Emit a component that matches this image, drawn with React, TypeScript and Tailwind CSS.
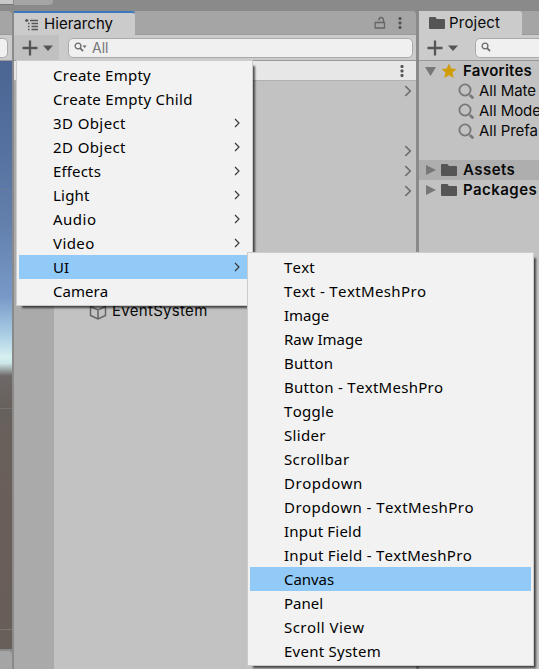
import React from "react";

type Item = { label: string; sub?: boolean; active?: boolean; track?: string };

const createMenu: Item[] = [
  { label: "Create Empty", track: "tracking-[0.25px]" },
  { label: "Create Empty Child", track: "tracking-[0.28px]" },
  { label: "3D Object", sub: true, track: "tracking-[0.4px]" },
  { label: "2D Object", sub: true, track: "tracking-[0.4px]" },
  { label: "Effects", sub: true, track: "tracking-[0.15px]" },
  { label: "Light", sub: true, track: "tracking-[0.2px]" },
  { label: "Audio", sub: true, track: "tracking-[0.5px]" },
  { label: "Video", sub: true, track: "tracking-[0.4px]" },
  { label: "UI", sub: true, active: true },
  { label: "Camera", track: "tracking-[0.05px]" },
];

const uiMenu: Item[] = [
  { label: "Text", track: "tracking-[0.2px]" },
  { label: "Text - TextMeshPro", track: "tracking-[0.37px]" },
  { label: "Image" },
  { label: "Raw Image" },
  { label: "Button", track: "tracking-[0.15px]" },
  { label: "Button - TextMeshPro", track: "tracking-[0.28px]" },
  { label: "Toggle", track: "tracking-[0.3px]" },
  { label: "Slider", track: "tracking-[0.3px]" },
  { label: "Scrollbar", track: "tracking-[0.35px]" },
  { label: "Dropdown", track: "tracking-[0.5px]" },
  { label: "Dropdown - TextMeshPro", track: "tracking-[0.43px]" },
  { label: "Input Field", track: "tracking-[0.2px]" },
  { label: "Input Field - TextMeshPro", track: "tracking-[0.28px]" },
  { label: "Canvas", active: true, track: "tracking-[-0.05px]" },
  { label: "Panel" },
  { label: "Scroll View", track: "tracking-[0.45px]" },
  { label: "Event System", track: "tracking-[0.25px]" },
];

function MenuRows({ items }: { items: Item[] }) {
  return (
    <>
      {items.map((it) => (
        <div
          key={it.label}
          className={`flex h-6 items-center justify-between pl-[34px] pr-[10px] ${it.active ? "bg-[#91c9f7]" : ""}`}
        >
          <span className={`whitespace-pre [font-kerning:none] ${it.track ?? ""}`}>{it.label}</span>
          {it.sub && (
            <svg width="6" height="10" viewBox="0 0 6 10" fill="none" stroke="#333" strokeWidth="1.1">
              <path d="M1 1l4 4-4 4" />
            </svg>
          )}
        </div>
      ))}
    </>
  );
}

function Plus() {
  return (
    <svg width="32" height="16" viewBox="0 0 32 16" className="shrink-0">
      <path d="M8 .5v15M.5 8h15" stroke="#555" strokeWidth="2.3" />
      <path d="M21 5.5h10l-5 5.5z" fill="#555" />
    </svg>
  );
}

function Kebab() {
  return (
    <svg width="4" height="14" viewBox="0 0 4 14" fill="#555">
      <rect x="0.5" y="1" width="3" height="3" rx="1" />
      <rect x="0.5" y="5.5" width="3" height="3" rx="1" />
      <rect x="0.5" y="10" width="3" height="3" rx="1" />
    </svg>
  );
}

function Folder() {
  return (
    <svg width="16" height="14" viewBox="0 0 16 14" fill="#555" className="shrink-0">
      <path d="M0 2Q0 1 1 1h5q1 0 1.3 1l.4 1H15q1 0 1 1v8q0 1-1 1H1q-1 0-1-1z" />
    </svg>
  );
}

function Lens() {
  return (
    <svg width="17" height="17" viewBox="0 0 17 17" fill="none" stroke="#777" className="shrink-0">
      <circle cx="7" cy="7" r="5.6" strokeWidth="1.8" />
      <path d="M10.8 11l1.2 1.100" strokeWidth="1.6" />
      <path d="M12 12.200l3.300 3" strokeWidth="2.8" />
    </svg>
  );
}

function SmallLens({ menu }: { menu?: boolean }) {
  return (
    <svg width="13" height="11" viewBox="0 0 13 11" fill="none" stroke="#6b6b6b" className="shrink-0">
      <circle cx="4" cy="4" r="2.9" strokeWidth="1.3" />
      <path d="M6.1 6.1l3 3" strokeWidth="1.6" />
      {menu && <path d="M8.500 3.500h4.200l-2.100 2.400z" fill="#6b6b6b" stroke="none" />}
    </svg>
  );
}

function Chevron() {
  return (
    <svg width="8" height="12" viewBox="0 0 8 12" fill="none" stroke="#6e6e6e" strokeWidth="1.6">
      <path d="M1.3 1.2L6.3 6l-5 4.800" />
    </svg>
  );
}

const hierarchyRows = ["chevron", "", "", "chevron", "chevron", "chevron", "", "", "", "", "", "object"];

export default function App() {
  return (
    <div className="relative flex h-[669px] w-[539px] flex-col overflow-hidden bg-[#8a8a8a] font-['Inter',sans-serif] text-[15px] text-[#090909]">
      <div className="flex h-[11px] shrink-0 items-start">
        <div className="h-[5px] w-[13px] border-b border-[#777] bg-[#c8c8c8]" />
        <div className="ml-px h-[5px] w-[39px] rounded-br bg-[#a5a5a5]" />
      </div>

      <div className="flex min-h-0 flex-1">
        <div className="flex w-3 shrink-0 flex-col">
          <div className="h-6 shrink-0 rounded-tr border-b border-[#999] bg-[#a5a5a5]" />
          <div className="flex h-[25px] shrink-0 items-center bg-[#cbcbcb]">
            <div className="h-5 w-2 rounded-r-[5px] border border-l-0 border-[#aaa] bg-[#f0f0f0]" />
          </div>
          <div className="h-px shrink-0 bg-[#999]" />
          <div className="h-[315px] shrink-0 bg-[linear-gradient(180deg,#4c6593_0%,#5572a0_30%,#6380ad_52%,#7899c8_75%,#a6cae3_86%,#d5f0f0_94%,#cce5e6_96%,#6d6868_100%)] pt-[128px]">
            <div className="h-px bg-[#747f95]/60" />
          </div>
          <div className="h-[33px] shrink-0 border-b border-[#77716d] bg-[linear-gradient(#6e6868,#67605b)]" />
          <div className="h-[221px] shrink-0 border-b border-[#7d7670] bg-[linear-gradient(#67615d,#6a5f58_40%,#685e58)]" />
          <div className="h-[19px] shrink-0 bg-[#675f5a]" />
          <div className="mt-[2px] flex-1 rounded-tr bg-[#a5a5a5]" />
        </div>

        <div className="ml-[2px] flex w-[402px] shrink-0 flex-col">
          <div className="flex h-6 shrink-0 rounded-tr bg-[#a5a5a5]">
            <div className="flex w-[121px] items-center rounded-tr-[3px] border-t-2 border-[#3a79bb] bg-[#cbcbcb] pl-[11px]">
              <svg width="14" height="13" viewBox="0 0 14 13" stroke="#555" strokeWidth="1.3" fill="none">
                <path d="M0 2.500h3.500M5 2.500h8M3 5.500h1.500M6.500 5.500h6.500M3 8.500h1.500M6.500 8.500h6.500M3 11.500h1.500M6.500 11.500h6.500M1.700 1v3" />
              </svg>
              <span className="ml-[5px] text-[15px] tracking-[0.05px]">Hierarchy</span>
            </div>
            <div className="flex flex-1 items-center justify-end border-b border-[#999] pr-[14px]">
              <svg width="12" height="14" viewBox="0 0 12 14" fill="none" stroke="#666" strokeWidth="1.3" className="mr-[12px]">
                <path d="M1.200 6.500h9.300v5.500H1.200zM9.500 6.500V3.800a2.200 2.200 0 0 0-4.600 0v.7" />
              </svg>
              <Kebab />
            </div>
          </div>
          <div className="flex h-[25px] shrink-0 items-center bg-[#cbcbcb]">
            <div className="flex h-full w-[45px] items-start bg-[#c0c0c0] pl-[8px] pt-[5px]">
              <Plus />
            </div>
            <div className="ml-[9px] flex h-5 w-[345px] items-center rounded-[5px] border border-[#aaa] bg-[#f0f0f0] pl-[5px] text-[14px] text-[#777]">
              <SmallLens menu />
              <span className="ml-[5px]">All</span>
            </div>
          </div>
          <div className="h-px shrink-0 bg-[#999]" />
          <div className="flex h-5 shrink-0 items-center justify-end border-b border-[#b0b0b0] bg-[#e7e7e7] pr-[12px]">
            <Kebab />
          </div>
          <div className="flex flex-1">
            <div className="w-10 bg-[#aaa]" />
            <div className="flex-1 bg-[#c2c2c2]">
              {hierarchyRows.map((row, i) => (
                <div key={i} className="flex h-5 items-center">
                  {row === "chevron" && (
                    <div className="ml-auto mr-[4px]">
                      <Chevron />
                    </div>
                  )}
                  {row === "object" && (
                    <>
                      <svg width="18" height="18" viewBox="0 0 18 18" fill="none" stroke="#666" strokeWidth="1.5" className="ml-[35px]">
                        <path d="M9 1l7.500 3.500v9L9 17l-7.500-3.500v-9zM1.500 4.500L9 8l7.500-3.500M9 8v9" />
                      </svg>
                      <span className="ml-[5px] tracking-[0.3px]">EventSystem</span>
                    </>
                  )}
                </div>
              ))}
            </div>
          </div>
        </div>

        <div className="ml-[3px] flex w-[120px] shrink-0 flex-col overflow-hidden">
          <div className="flex h-6 shrink-0 bg-[#a5a5a5]">
            <div className="flex w-[103px] items-center rounded-tr-[3px] bg-[#cbcbcb] pl-[10px]">
              <Folder />
              <span className="ml-[4px] pt-px tracking-[0.2px]">Project</span>
            </div>
            <div className="flex-1 border-b border-[#999]" />
          </div>
          <div className="flex h-[25px] shrink-0 items-center bg-[#cbcbcb] pl-[8px]">
            <div className="flex pt-px">
              <Plus />
            </div>
            <div className="ml-[16px] flex h-5 w-[100px] shrink-0 items-center rounded-[5px] border border-[#aaa] bg-[#f0f0f0] pl-[5px]">
              <SmallLens />
            </div>
          </div>
          <div className="h-px shrink-0 bg-[#999]" />
          <div className="flex-1 whitespace-nowrap bg-[#c2c2c2]">
            <div className="flex h-5 items-center pl-[6px] font-semibold">
              <svg width="11" height="9" viewBox="0 0 11 9" fill="#777">
                <path d="M0 0h11L5.500 9z" />
              </svg>
              <svg width="16" height="16" viewBox="0 0 16 16" fill="#d09c08" className="ml-[5px]">
                <path d="M8 .5l2.200 5 5.300.5-4 3.600 1.200 5.400L8 12.200 3.300 15l1.200-5.400-4-3.600 5.300-.5z" />
              </svg>
              <span className="ml-[6px] tracking-[0.25px]">Favorites</span>
            </div>
            {["All Mate", "All Mode", "All Prefa"].map((t) => (
              <div key={t} className="flex h-5 items-center pl-[39px]">
                <Lens />
                <span className="ml-[4px] tracking-[-0.05px]">{t}</span>
              </div>
            ))}
            <div className="h-[19px]" />
            {["Assets", "Packages"].map((t) => (
              <div
                key={t}
                className={`flex h-5 items-center pl-[7px] font-semibold ${t === "Assets" ? "bg-[#aeaeae]" : ""}`}
              >
                <svg width="10" height="10" viewBox="0 0 10 10" fill="#777">
                  <path d="M0 0l10 5-10 5z" />
                </svg>
                <div className="ml-[5px] flex">
                  <Folder />
                </div>
                <span className="ml-[6px] tracking-[0.45px]">{t}</span>
              </div>
            ))}
          </div>
        </div>
      </div>

      <div className="absolute left-[16px] top-[60px] h-[246px] w-[237px] border border-[#ccc] bg-[#f2f2f2] p-[2px] font-['Noto_Sans',sans-serif] text-[15px] text-black shadow-[4px_4px_2px_-2px_rgba(0,0,0,0.65)]">
        <MenuRows items={createMenu} />
      </div>
      <div className="absolute left-[247px] top-[252px] h-[414px] w-[287px] border border-[#ccc] bg-[#f2f2f2] p-[2px] font-['Noto_Sans',sans-serif] text-[15px] text-black shadow-[4px_4px_2px_-2px_rgba(0,0,0,0.65)]">
        <MenuRows items={uiMenu} />
      </div>
    </div>
  );
}
